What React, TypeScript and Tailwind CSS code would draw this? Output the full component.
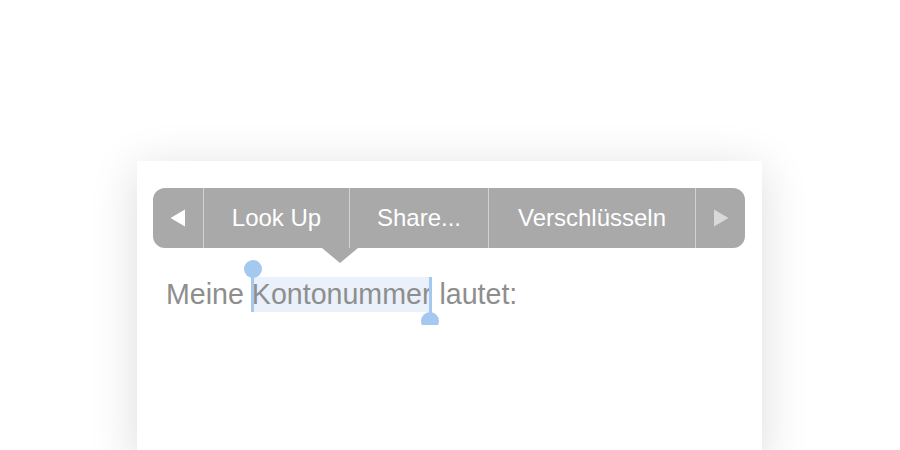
import React from "react";

const font = { fontFamily: '"Liberation Sans", Arial, sans-serif' };

function Segment({ w, children }: { w: string; children: React.ReactNode }) {
  return (
    <div className={`${w} h-full flex items-center justify-center border-l border-[#d2d2d2] first:border-l-0`}>
      {children}
    </div>
  );
}

export default function App() {
  return (
    <div className="w-[900px] h-[450px] bg-white overflow-hidden flex justify-center pt-[161px]" style={font}>
      <div className="w-[625px] h-[300px] bg-white shadow-[0_8px_45px_rgba(0,0,0,0.14)] ml-[-1px] pt-[27px] pl-[16px]">
        {/* edit menu */}
        <div className="relative w-[592px] h-[60px] rounded-[12px] bg-[#a9a9a9] flex text-white text-[24px]">
          <Segment w="w-[50px]">
            <svg width="16" height="18" viewBox="0 0 16 18">
              <path d="M15 0.5 L15 17.5 L0.5 9 Z" fill="#ffffff" />
            </svg>
          </Segment>
          <Segment w="w-[146px]">Look Up</Segment>
          <Segment w="w-[139px]">Share...</Segment>
          <Segment w="w-[207px]">Verschlüsseln</Segment>
          <Segment w="w-[50px]">
            <svg width="16" height="18" viewBox="0 0 16 18" className="ml-[1px]">
              <path d="M1 0.5 L1 17.5 L15.5 9 Z" fill="#d9d9d9" />
            </svg>
          </Segment>
          <svg className="absolute left-[169px] top-[60px]" width="36" height="15" viewBox="0 0 36 15">
            <path d="M0 0 L36 0 L18 15 Z" fill="#a9a9a9" />
          </svg>
        </div>

        {/* text with selection */}
        <div className="mt-[29px] pl-[13px] text-[28.6px] leading-[35px] text-[#8e8e8e] whitespace-nowrap">
          Meine{" "}
          <span className="relative inline-block bg-[#eaf1fb]">
            Kontonummer
            <span className="absolute left-[-2px] top-[-17px] w-[18px] h-[18px] -translate-x-[6px] rounded-full bg-[#a5c8f1]" />
            <span className="absolute left-[-1px] top-0 w-[3px] h-[35px] bg-[#a5c8f1]" />
            <span className="absolute right-[-1px] top-0 w-[3px] h-[41px] bg-[#a5c8f1]" />
            <span className="absolute right-[-8px] top-[35px] w-[18px] h-[13px] overflow-hidden">
              <span className="block w-[18px] h-[18px] rounded-full bg-[#a5c8f1]" />
            </span>
          </span>{" "}
          lautet:
        </div>
      </div>
    </div>
  );
}
